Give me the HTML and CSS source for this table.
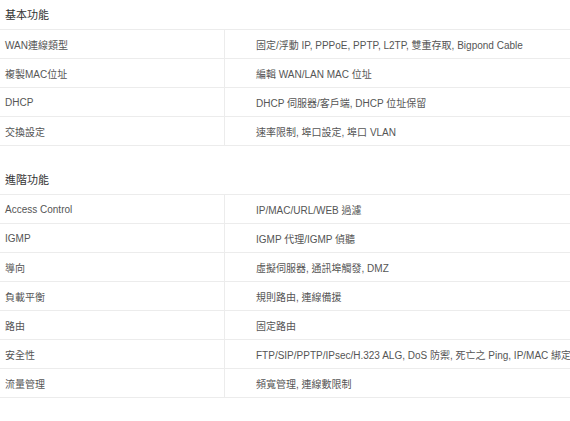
FILE: index.html
```html
<!DOCTYPE html>
<html lang="zh-Hant">
<head>
<meta charset="utf-8">
<link rel="stylesheet" href="styles.css">
</head>
<body>
<section class="spec">
  <h3 class="spec-title">基本功能</h3>
  <table class="spec-table">
    <tr><td class="k">WAN連線類型</td><td class="v">固定/浮動 IP, PPPoE, PPTP, L2TP, 雙重存取, Bigpond Cable</td></tr>
    <tr><td class="k">複製MAC位址</td><td class="v">編輯 WAN/LAN MAC 位址</td></tr>
    <tr><td class="k">DHCP</td><td class="v">DHCP 伺服器/客戶端, DHCP 位址保留</td></tr>
    <tr><td class="k">交換設定</td><td class="v">速率限制, 埠口設定, 埠口 VLAN</td></tr>
  </table>
</section>
<section class="spec spec-next">
  <h3 class="spec-title">進階功能</h3>
  <table class="spec-table">
    <tr><td class="k">Access Control</td><td class="v">IP/MAC/URL/WEB 過濾</td></tr>
    <tr><td class="k">IGMP</td><td class="v">IGMP 代理/IGMP 偵聽</td></tr>
    <tr><td class="k">導向</td><td class="v">虛擬伺服器, 通訊埠觸發, DMZ</td></tr>
    <tr><td class="k">負載平衡</td><td class="v">規則路由, 連線備援</td></tr>
    <tr><td class="k">路由</td><td class="v">固定路由</td></tr>
    <tr><td class="k">安全性</td><td class="v">FTP/SIP/PPTP/IPsec/H.323 ALG, DoS 防禦, 死亡之 Ping, IP/MAC 綁定</td></tr>
    <tr><td class="k">流量管理</td><td class="v">頻寬管理, 連線數限制</td></tr>
  </table>
</section>
</body>
</html>
```

FILE: styles.css
```css
html, body {
  margin: 0;
  padding: 0;
  background: #fff;
}
body {
  font-family: "Liberation Sans", Arial, "Noto Sans CJK TC", sans-serif;
  font-size: 10px;
  color: #555;
  width: 570px;
}
.spec-title {
  margin: 0;
  height: 30px;
  line-height: 30px;
  padding-left: 5px;
  font-size: 11px;
  font-weight: normal;
  color: #333;
  border-bottom: 1px solid #ececec;
  box-sizing: border-box;
}
.spec-next {
  margin-top: 19px;
}
.spec-table {
  width: 100%;
  border-collapse: collapse;
  table-layout: fixed;
}
.spec-table td {
  height: 28px;
  padding: 0;
  border-bottom: 1px solid #ececec;
  vertical-align: middle;
  white-space: nowrap;
}
.spec-table .k {
  width: 219px;
  padding-left: 5px;
  border-right: 1px solid #ececec;
}
.spec-table .v {
  padding-left: 31px;
}
```
